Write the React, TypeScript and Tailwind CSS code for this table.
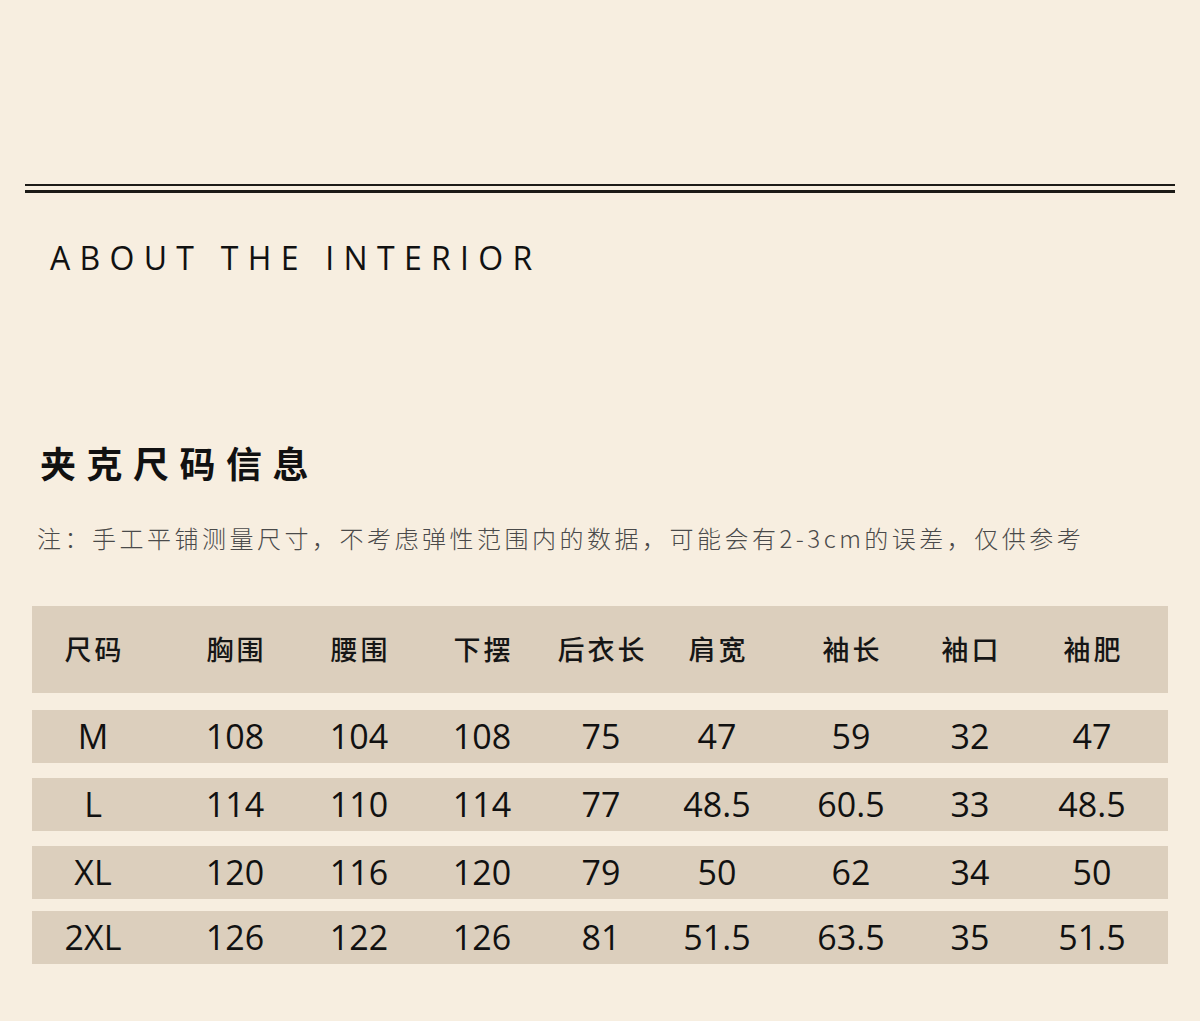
import React from "react";

const cols = ["尺码", "胸围", "腰围", "下摆", "后衣长", "肩宽", "袖长", "袖口", "袖肥"];
const rows = [
  ["M", "108", "104", "108", "75", "47", "59", "32", "47"],
  ["L", "114", "110", "114", "77", "48.5", "60.5", "33", "48.5"],
  ["XL", "120", "116", "120", "79", "50", "62", "34", "50"],
  ["2XL", "126", "122", "126", "81", "51.5", "63.5", "35", "51.5"],
];
const rowGaps = ["mt-[17px]", "mt-[15px]", "mt-[15px]", "mt-[12px]"];

const grid = "grid grid-cols-[122px_162px_86px_160px_78px_154px_114px_124px_120px_16px]";
const cjk = { fontFamily: '"Noto Sans CJK SC", "Noto Sans", sans-serif' };
const latin = { fontFamily: '"Open Sans", "Noto Sans", sans-serif' };

export default function App() {
  return (
    <div className="w-[1200px] h-[1021px] bg-[#f7eee0] overflow-hidden pt-[184px]" style={cjk}>
      <div className="mx-[25px]">
        <div className="h-[2px] bg-[#1c1a17]" />
        <div className="h-[4px]" />
        <div className="h-[3px] bg-[#1c1a17]" />
      </div>
      <div
        className="ml-[50px] mt-[45px] text-[32px] leading-[40px] tracking-[9.3px] text-[#111]"
        style={latin}
      >
        ABOUT THE INTERIOR
      </div>
      <div className="ml-[40px] mt-[160px] text-[36px] leading-[48px] font-bold tracking-[10.5px] text-[#111]">
        夹克尺码信息
      </div>
      <div className="ml-[37px] mt-[36px] text-[24px] leading-[32px] font-light tracking-[3.5px] text-[#4a4a4a]">
        注：手工平铺测量尺寸，不考虑弹性范围内的数据，可能会有2-3cm的误差，仅供参考
      </div>
      <div className="mx-[32px] mt-[52px] flex flex-col">
        <div className={`${grid} h-[87px] items-center bg-[#dccfbd] text-[27px] font-medium tracking-[3px] text-[#161616]`}>
          {cols.map((c) => (
            <div key={c} className="flex justify-center whitespace-nowrap pl-[3px]">{c}</div>
          ))}
          <div />
        </div>
        {rows.map((r, ri) => (
          <div
            key={r[0]}
            className={`${grid} ${rowGaps[ri]} h-[53px] items-center bg-[#dccfbd] text-[34px] text-[#111]`}
            style={latin}
          >
            {r.map((v, i) => (
              <div key={i} className="flex justify-center whitespace-nowrap">{v}</div>
            ))}
            <div />
          </div>
        ))}
      </div>
    </div>
  );
}
